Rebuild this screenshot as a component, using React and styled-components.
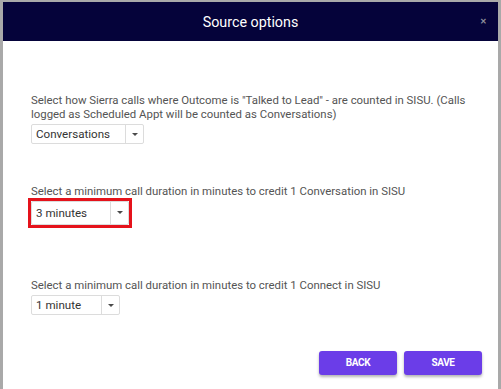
import React from "react";
import styled, { createGlobalStyle } from "styled-components";

const Global = createGlobalStyle`
  html, body { margin: 0; padding: 0; }
  body {
    background: #a9a9a9;
    font-family: Roboto, "Liberation Sans", Arial, sans-serif;
  }
  * { box-sizing: border-box; }
`;

const Backdrop = styled.div`
  height: 389px;
  padding: 2px 3px 0 3px;
  display: flex;
`;

const Modal = styled.div`
  flex: 1;
  background: #ffffff;
  display: flex;
  flex-direction: column;
`;

const Header = styled.div`
  height: 39px;
  background: #05033a;
  display: grid;
  grid-template-columns: 1fr auto 1fr;
  align-items: center;
`;

const Title = styled.h2`
  grid-column: 2;
  margin: 0;
  font-size: 14.3px;
  font-weight: 400;
  color: #ffffff;
`;

const Close = styled.span`
  grid-column: 3;
  justify-self: end;
  margin-right: 11px;
  font-size: 8px;
  font-weight: 700;
  color: #8e8e9c;
  line-height: 1;
`;

const Body = styled.div`
  flex: 1;
  display: flex;
  flex-direction: column;
  padding: 53px 16px 0 28px;
`;

const Field = styled.div`
  margin-top: ${(p) => p.$top || 0}px;
  display: flex;
  flex-direction: column;
  align-items: flex-start;
`;

const Label = styled.p`
  margin: 0 0 ${(p) => p.$gap ?? 3}px 0;
  font-size: 11.4px;
  line-height: 13.5px;
  color: #545454;
  max-width: 440px;
`;

const Select = styled.div`
  display: flex;
  width: ${(p) => p.$width}px;
  height: ${(p) => p.$height || 20}px;
  border: 1px solid #dcdcdc;
  border-radius: 2px;
  background: #fff;
`;

const Value = styled.span`
  flex: 1;
  display: flex;
  align-items: center;
  padding-left: 4px;
  font-size: 11.6px;
  color: #333333;
`;

const ArrowCell = styled.span`
  width: 18px;
  border-left: 1px solid #dcdcdc;
  display: flex;
  align-items: center;
  justify-content: center;
  &::after {
    content: "";
    border-left: 3.5px solid transparent;
    border-right: 3.5px solid transparent;
    border-top: 3.5px solid #4a4a4a;
  }
`;

const Highlight = styled.div`
  border: 3px solid #e5121b;
  margin-left: -3px;
`;

const Footer = styled.div`
  margin-top: 35.5px;
  display: flex;
  justify-content: flex-end;
  gap: 7px;
`;

const Button = styled.button`
  width: 78px;
  height: 24px;
  border: none;
  border-radius: 3px;
  background: #6b3de8;
  color: #ffffff;
  font-family: Roboto, "Liberation Sans", Arial, sans-serif;
  font-size: 10px;
  font-weight: 700;
  letter-spacing: -0.4px;
  text-transform: uppercase;
  box-shadow: 0 2px 3px rgba(0, 0, 0, 0.3);
  cursor: pointer;
`;

const Dropdown = ({ width, height, children }) => (
  <Select $width={width} $height={height}>
    <Value>{children}</Value>
    <ArrowCell />
  </Select>
);

export default function App() {
  return (
    <>
      <Global />
      <Backdrop>
        <Modal>
          <Header>
            <Title>Source options</Title>
            <Close>✕</Close>
          </Header>
          <Body>
            <Field>
              <Label>
                Select how Sierra calls where Outcome is "Talked to Lead" - are counted in SISU. (Calls
                logged as Scheduled Appt will be counted as Conversations)
              </Label>
              <Dropdown width={113}>Conversations</Dropdown>
            </Field>
            <Field $top={40.5}>
              <Label $gap={-0.5}>
                Select a minimum call duration in minutes to credit 1 Conversation in SISU
              </Label>
              <Highlight>
                <Dropdown width={98} height={24}>3 minutes</Dropdown>
              </Highlight>
            </Field>
            <Field $top={51}>
              <Label $gap={3}>
                Select a minimum call duration in minutes to credit 1 Connect in SISU
              </Label>
              <Dropdown width={89}>1 minute</Dropdown>
            </Field>
            <Footer>
              <Button>Back</Button>
              <Button>Save</Button>
            </Footer>
          </Body>
        </Modal>
      </Backdrop>
    </>
  );
}
